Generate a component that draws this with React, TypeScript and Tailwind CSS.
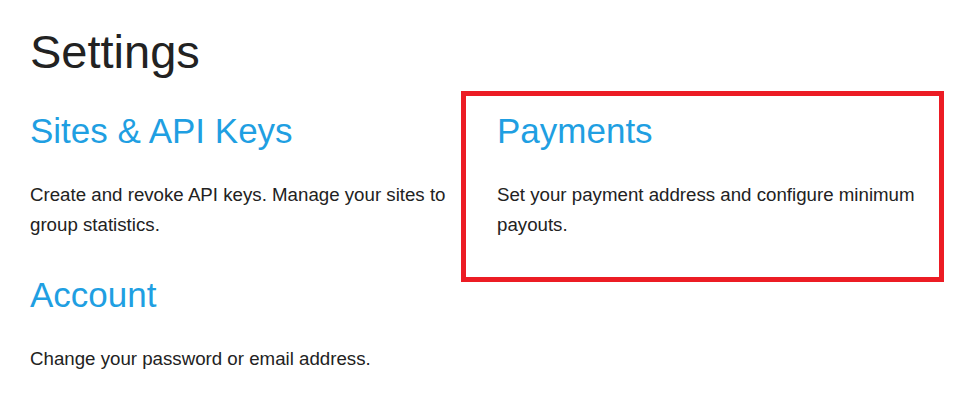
export default function App() {
  const font = { fontFamily: '"Liberation Sans", Arial, Helvetica, sans-serif' };
  return (
    <div className="w-[957px] h-[419px] bg-white text-[#222222] overflow-hidden" style={font}>
      <div className="pl-[30px]">
        <h1 className="pt-[26px] text-[47px] leading-[1.1] font-normal text-[#222222]">Settings</h1>
        <div className="mt-[13px] grid grid-cols-[431px_483px]">
          <div className="flex flex-col">
            <h2 className="mt-[21px] text-[35px] leading-[1.1] font-normal text-[#1f9fe2]">Sites &amp; API Keys</h2>
            <p className="mt-[30px] text-[18.7px] leading-[30px]">
              Create and revoke API keys. Manage your sites to group statistics.
            </p>
            <h2 className="mt-[36px] text-[35px] leading-[1.1] font-normal text-[#1f9fe2]">Account</h2>
            <p className="mt-[29px] text-[18.7px] leading-[30px]">Change your password or email address.</p>
          </div>
          <div className="self-start border-[5px] border-[#ec1c24] pl-[31px] pr-[12px] pt-[16px] pb-[37px]">
            <h2 className="text-[35px] leading-[1.1] font-normal text-[#1f9fe2]">Payments</h2>
            <p className="mt-[30px] text-[18.7px] leading-[30px]">
              Set your payment address and configure minimum payouts.
            </p>
          </div>
        </div>
      </div>
    </div>
  );
}
